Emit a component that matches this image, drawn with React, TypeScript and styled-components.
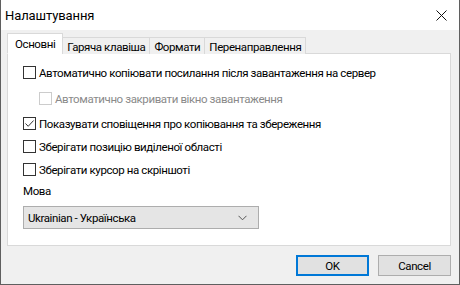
import styled, { createGlobalStyle } from 'styled-components'

const Global = createGlobalStyle`
  html, body { margin: 0; padding: 0; background: #f0f0f0; }
  * { box-sizing: border-box; }
`

const tabs = ['Основні', 'Гаряча клавіша', 'Формати', 'Перенаправлення']

const options = [
  { text: 'Автоматично копіювати посилання після завантаження на сервер', checked: false },
  { text: 'Автоматично закривати вікно завантаження', checked: false, disabled: true, nested: true },
  { text: 'Показувати сповіщення про копіювання та збереження', checked: true },
  { text: 'Зберігати позицію виділеної області', checked: false },
  { text: 'Зберігати курсор на скріншоті', checked: false },
]

const CheckMark = () => (
  <svg width='11' height='11' viewBox='0 0 11 11'>
    <path d='M1.5 5.5 L4.2 8.3 L9.6 2.5' fill='none' stroke='#333' strokeWidth='1' />
  </svg>
)

const App = () => {
  return (
    <Window>
      <Global />
      <TitleBar>
        <Title>Налаштування</Title>
        <Close>
          <svg width='11' height='11' viewBox='0 0 11 11'>
            <path d='M0.5 0.5 L10.5 10.5 M10.5 0.5 L0.5 10.5' stroke='#111' strokeWidth='1' />
          </svg>
        </Close>
      </TitleBar>
      <Body>
        <TabStrip>
          {tabs.map((t, i) => (
            <Tab key={t} $active={i === 0}>{t}</Tab>
          ))}
        </TabStrip>
        <Panel>
          {options.map((o) => (
            <Row key={o.text} $nested={o.nested} $disabled={o.disabled}>
              <Box $disabled={o.disabled}>{o.checked && <CheckMark />}</Box>
              <span>{o.text}</span>
            </Row>
          ))}
          <Label>Мова</Label>
          <Select>
            <span>Ukrainian - Українська</span>
            <svg width='9' height='6' viewBox='0 0 9 6'>
              <path d='M0.5 0.8 L4.5 4.8 L8.5 0.8' fill='none' stroke='#555' strokeWidth='1' />
            </svg>
          </Select>
        </Panel>
        <Footer>
          <Button $primary>OK</Button>
          <Button>Cancel</Button>
        </Footer>
      </Body>
    </Window>
  )
}

const Window = styled.div`
  width: 460px;
  height: 285px;
  display: flex;
  flex-direction: column;
  border: 1px solid #5f5f5f;
  border-top: none;
  background: #f0f0f0;
  font-family: Roboto, 'Noto Sans', sans-serif;
  font-size: 11.5px;
  letter-spacing: -0.4px;
  color: #000;
`

const TitleBar = styled.div`
  height: 30px;
  display: flex;
  align-items: center;
  justify-content: space-between;
  padding: 0 12px 0 4px;
  background: #fff;
`

const Title = styled.div`
  font-size: 13px;
  letter-spacing: -0.1px;
`

const Close = styled.div`
  display: flex;
  align-items: center;
`

const Body = styled.div`
  flex: 1;
  display: flex;
  flex-direction: column;
  padding: 3px 8px 0 6px;
`

const TabStrip = styled.div`
  display: flex;
  align-items: flex-end;
  height: 21px;
  position: relative;
  z-index: 1;
`

const Tab = styled.div<{ $active?: boolean }>`
  height: ${(p) => (p.$active ? '21px' : '17px')};
  padding: 0 ${(p) => (p.$active ? '7px' : '4px')};
  display: flex;
  align-items: center;
  border: 1px solid #d9d9d9;
  border-bottom: ${(p) => (p.$active ? '1px solid #fff' : 'none')};
  margin-right: -1px;
  background: ${(p) => (p.$active ? '#fff' : '#f0f0f0')};
  padding-top: ${(p) => (p.$active ? '0' : '1px')};
  white-space: nowrap;
`

const Panel = styled.div`
  height: 193px;
  margin-top: -1px;
  background: #fff;
  border: 1px solid #d9d9d9;
  padding: 12px 14px 0 15px;
  display: flex;
  flex-direction: column;
`

const Row = styled.div<{ $nested?: boolean; $disabled?: boolean }>`
  display: flex;
  align-items: center;
  gap: 3px;
  height: 13px;
  margin-left: ${(p) => (p.$nested ? '16px' : '0')};
  margin-bottom: ${(p) => (p.$nested ? '12px' : '10px')};
  margin-top: ${(p) => (p.$nested ? '3px' : '0')};
  color: ${(p) => (p.$disabled ? '#8a8a8a' : '#000')};
  white-space: nowrap;
`

const Box = styled.div<{ $disabled?: boolean }>`
  width: 13px;
  height: 13px;
  flex: none;
  border: 1px solid ${(p) => (p.$disabled ? '#cccccc' : '#333')};
  background: #fff;
  display: flex;
  align-items: center;
  justify-content: center;
`

const Label = styled.div`
  margin-top: -2px;
  height: 18px;
`

const Select = styled.div`
  width: 236px;
  height: 23px;
  margin-top: 4px;
  display: flex;
  align-items: center;
  justify-content: space-between;
  padding: 0 11px 0 4px;
  background: #e5e5e5;
  border: 1px solid #adadad;
`

const Footer = styled.div`
  display: flex;
  justify-content: flex-end;
  gap: 9px;
  padding: 9px 0 0 0;
`

const Button = styled.div<{ $primary?: boolean }>`
  width: 73px;
  height: 21px;
  display: flex;
  align-items: center;
  justify-content: center;
  background: #e1e1e1;
  border: ${(p) => (p.$primary ? '2px solid #0078d7' : '1px solid #adadad')};
`

export default App
